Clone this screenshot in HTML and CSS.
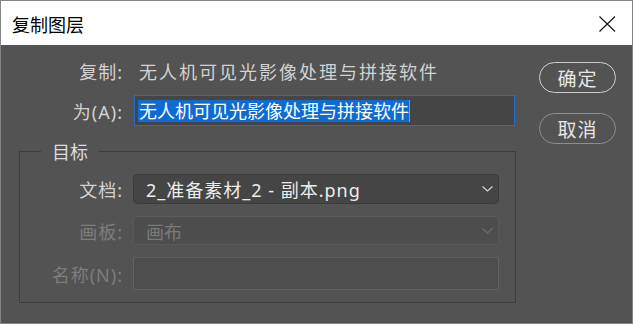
FILE: index.html
```html
<!DOCTYPE html>
<html lang="zh-CN">
<head>
<meta charset="UTF-8" />
<title>复制图层</title>
<link rel="stylesheet" href="styles.css">
</head>
<body>

<div class="dialog">
  <div class="titlebar">
    <span class="title">复制图层</span>
    <svg class="close" width="17" height="16" viewBox="0 0 17 16">
      <path d="M0.5 0.5 L16 15.5 M16 0.5 L0.5 15.5" stroke="#111" stroke-width="1.1" fill="none"/>
    </svg>
  </div>

  <div class="content">
    <div class="main">
      <div class="row top-row">
        <span class="label">复制:</span>
        <span class="value">无人机可见光影像处理与拼接软件</span>
      </div>
      <div class="row">
        <span class="label">为(A):</span>
        <div class="name-input"><span class="sel">无人机可见光影像处理与拼接软件</span><span class="caret"></span></div>
      </div>

      <fieldset class="target">
        <legend>目标</legend>
        <div class="row frow">
          <span class="label">文档:</span>
          <div class="select">
            <span class="latin">2_准备素材_2 - 副本.png</span>
            <svg class="chev" width="11" height="6" viewBox="0 0 11 6"><path d="M0.5 0.5 L5.5 5 L10.5 0.5" stroke="#d4d4d4" stroke-width="1.2" fill="none"/></svg>
          </div>
        </div>
        <div class="row frow off">
          <span class="label">画板:</span>
          <div class="select disabled">
            <span>画布</span>
            <svg class="chev" width="11" height="6" viewBox="0 0 11 6"><path d="M0.5 0.5 L5.5 5 L10.5 0.5" stroke="#6c6c6c" stroke-width="1.2" fill="none"/></svg>
          </div>
        </div>
        <div class="row frow off">
          <span class="label">名称(N):</span>
          <div class="empty-input"></div>
        </div>
      </fieldset>
    </div>

    <div class="buttons">
      <button class="btn primary">确定</button>
      <button class="btn">取消</button>
    </div>
  </div>
</div>

</body>
</html>
```

FILE: styles.css
```css
body {
  margin: 0;
  padding: 0;
  background-color: #535353;
  font-family: "Noto Sans", "Noto Sans CJK SC", sans-serif;
}
.dialog {
  width: 631px;
  height: 322px;
  border: 1px solid #858585;
  background-color: #535353;
  display: flex;
  flex-direction: column;
}
.titlebar {
  height: 44px;
  background-color: #fff;
  display: flex;
  align-items: center;
  justify-content: space-between;
  padding: 0 16px 0 11px;
  flex-shrink: 0;
}
.title {
  font-family: "Noto Sans CJK SC", sans-serif;
  font-size: 18px;
  color: #000;
  margin-top: 1px;
}
.close {
  display: block;
  margin-top: 1px;
}
.content {
  display: flex;
  padding-top: 11px;
}
.main {
  width: 515px;
}
.row {
  display: grid;
  grid-template-columns: 121px 1fr;
  column-gap: 12px;
  align-items: center;
  color: #d2d2d2;
  font-size: 18px;
}
.label {
  text-align: right;
  white-space: nowrap;
  letter-spacing: 1px;
  margin-right: -1px;
}
.top-row {
  height: 30px;
  margin-bottom: 9px;
}
.value {
  letter-spacing: 2px;
  margin-left: 5px;
}
.name-input {
  height: 29px;
  width: 376px;
  border: 1px solid #1f6fd1;
  background-color: #454545;
  display: flex;
  align-items: center;
  padding-left: 3px;
  box-sizing: content-box;
}
.sel {
  background-color: #0f6bd2;
  color: #fff;
  line-height: 22px;
  padding-left: 1px;
}
.caret {
  display: inline-block;
  width: 1px;
  height: 22px;
  background-color: #e0802a;
}
.target {
  margin: 12px 0 0 18px;
  padding: 0 16px 12px 0;
  border: 1px solid #3e3e3e;
  width: 497px;
  box-sizing: border-box;
}
.target legend {
  margin-left: 21px;
  padding: 0 11px;
  color: #dcdcdc;
  font-size: 18px;
}
.frow {
  grid-template-columns: 102px 1fr;
  column-gap: 11px;
  margin-top: 12px;
}
.frow:first-of-type {
  margin-top: 10px;
}
.select {
  height: 28px;
  border: 1px solid #3c3c3c;
  border-radius: 4px;
  background-color: #454545;
  display: flex;
  align-items: center;
  justify-content: space-between;
  padding: 0 5px 0 12px;
  color: #ececec;
}
.latin {
  letter-spacing: 1px;
}
.chev {
  display: block;
}
.off {
  color: #7d7d7d;
}
.select.disabled {
  height: 27px;
  background-color: #4d4d4d;
  border-color: #5a5a5a;
  color: #7a7a7a;
}
.empty-input {
  height: 31px;
  border: 1px solid #616161;
  background-color: #4e4e4e;
}
.buttons {
  margin-left: 23px;
  padding-top: 6px;
  display: flex;
  flex-direction: column;
  gap: 20px;
}
.btn {
  width: 77px;
  height: 31px;
  border-radius: 16px;
  border: 1.5px solid #8d8d8d;
  background: transparent;
  color: #e6e6e6;
  font-family: "Noto Sans CJK SC", sans-serif;
  font-size: 19px;
  letter-spacing: 1px;
  padding: 0;
}
.btn.primary {
  border-color: #cfcfcf;
}
```
